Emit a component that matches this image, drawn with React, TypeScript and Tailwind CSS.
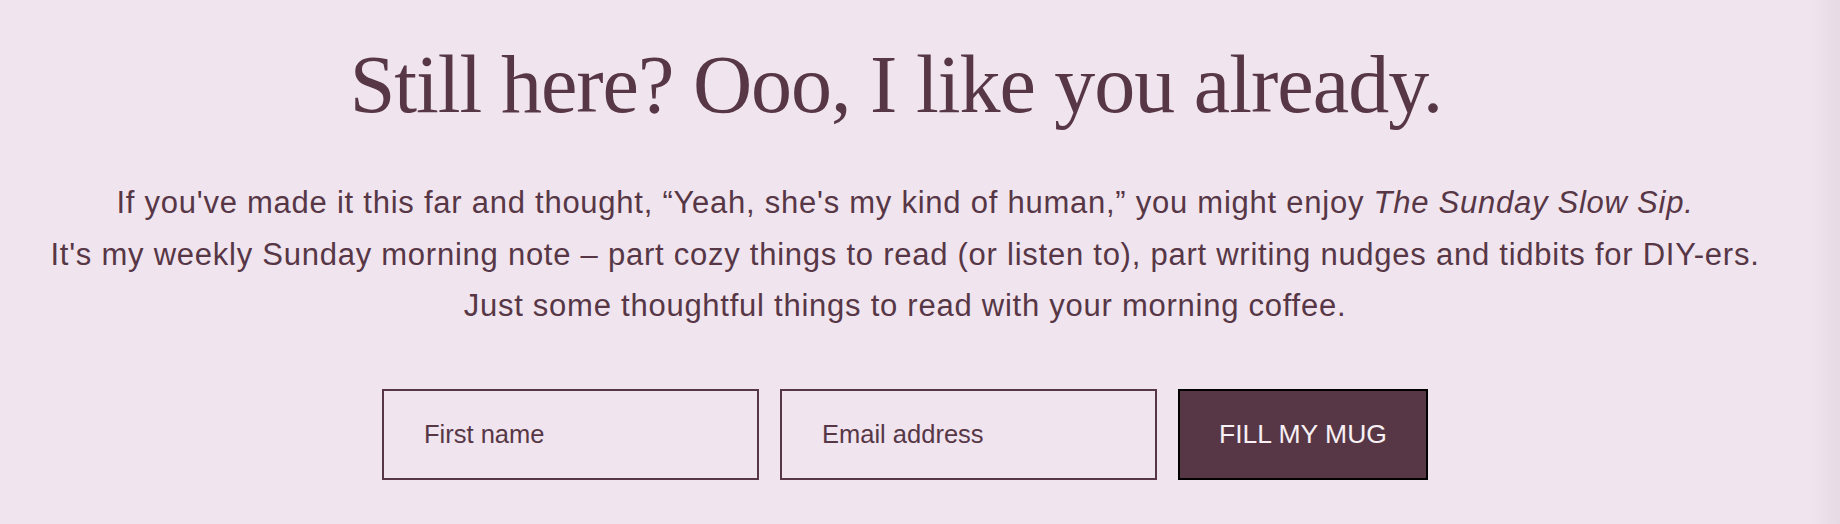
import React from 'react';

const App: React.FC = () => {
  return (
    <div className="flex min-h-screen w-full bg-[#f0e4ee]">
      <main className="flex flex-1 flex-col items-center pt-[36px] text-[#573746]">
        <h1 className="pr-[18px] font-['Liberation_Serif',serif] text-[82px] leading-[1.2] tracking-[-1px]">
          Still here? Ooo, I like you already.
        </h1>
        <div className="mt-[43px] text-center font-['Liberation_Sans',Arial,sans-serif] text-[31px] leading-[51.5px] tracking-[0.75px]">
          <p>
            If you've made it this far and thought, “Yeah, she's my kind of human,” you might enjoy{' '}
            <em>The Sunday Slow Sip.</em>
          </p>
          <p>It's my weekly Sunday morning note – part cozy things to read (or listen to), part writing nudges and tidbits for DIY-ers.</p>
          <p>Just some thoughtful things to read with your morning coffee.</p>
        </div>
        <form
          className="mt-[57px] flex gap-[21px] font-['Liberation_Sans',Arial,sans-serif] text-[25.5px]"
          onSubmit={(e) => e.preventDefault()}
        >
          <input
            type="text"
            placeholder="First name"
            className="h-[91px] w-[377px] border-2 border-[#573746] bg-transparent px-[40px] text-[#573746] placeholder-[#573746] outline-none"
          />
          <input
            type="email"
            placeholder="Email address"
            className="h-[91px] w-[377px] border-2 border-[#573746] bg-transparent px-[40px] text-[#573746] placeholder-[#573746] outline-none"
          />
          <button
            type="submit"
            className="h-[91px] w-[250px] border-2 border-black bg-[#573746] text-[26.5px] text-[#f7f0f4]"
          >
            FILL MY MUG
          </button>
        </form>
      </main>
      <div className="w-[30px] bg-gradient-to-r from-[#f0e4ee] to-[#e6dbe4]" />
    </div>
  );
};

export default App;
